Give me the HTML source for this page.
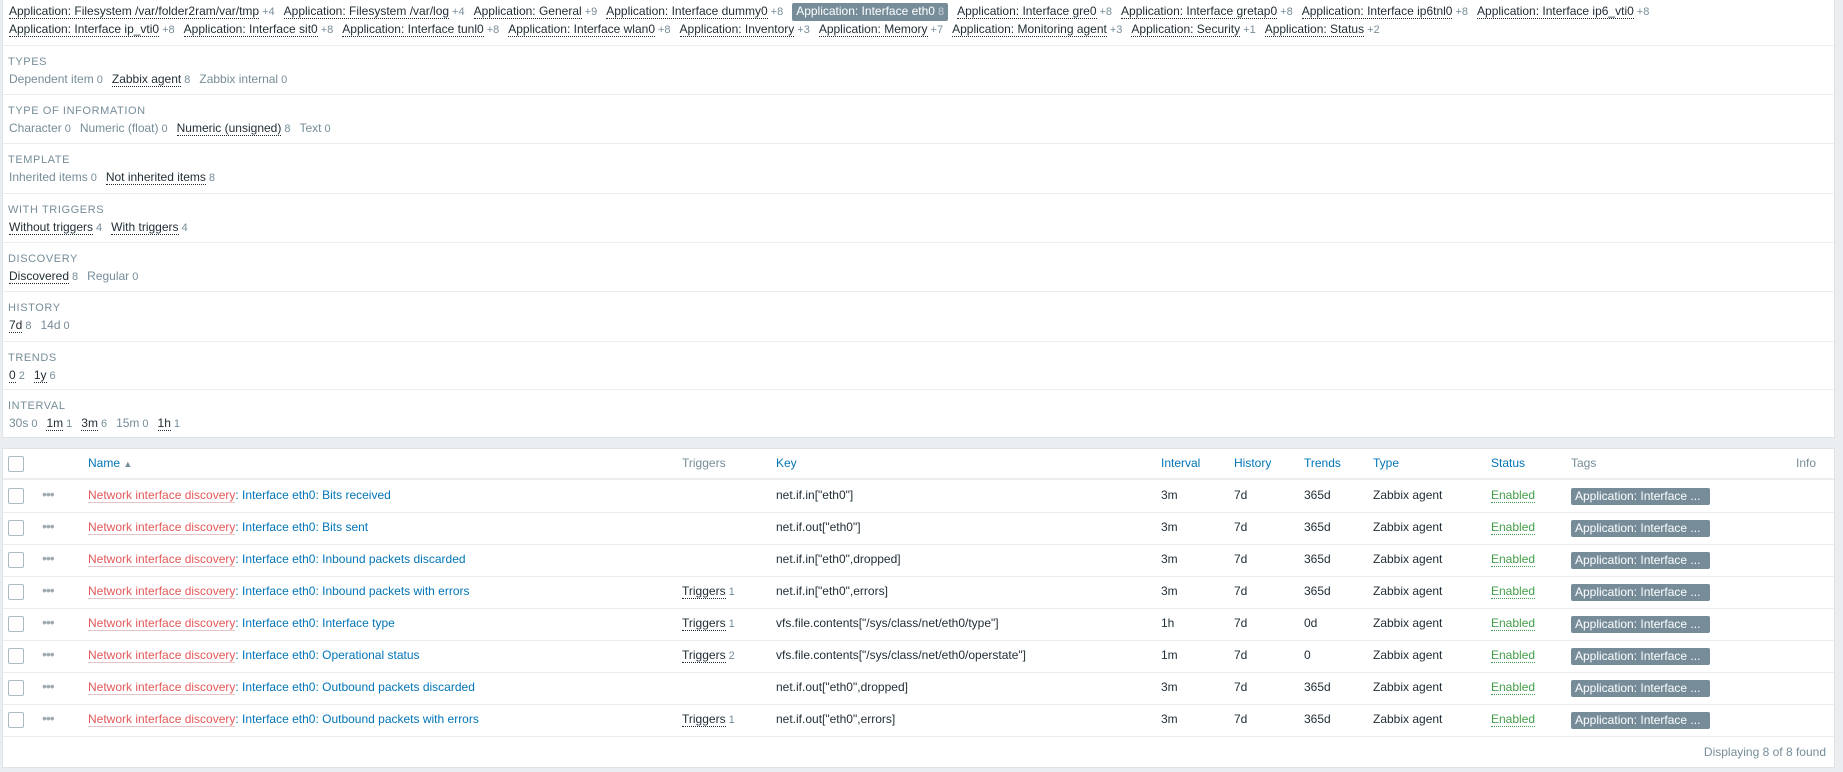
<!DOCTYPE html>
<html><head><meta charset="utf-8"><style>
*{box-sizing:border-box;margin:0;padding:0}
body{width:1843px;height:772px;background:#ebeef0;font-family:"Liberation Sans",Arial,sans-serif;font-size:12px;color:#1f2c33;position:relative;overflow:hidden}
.panel{position:absolute;left:2px;width:1833px;background:#fff;border:1px solid #dfe4e7}
.tags{position:absolute;left:6px;white-space:nowrap;line-height:16px}
.tags span.i{margin-right:9px;display:inline-block}
.l{border-bottom:1px dotted #1f2c33;color:#1f2c33}
.c{color:#768d99;font-size:11px;margin-left:3px}
.sel{background:#768d99;color:#fff;padding:1px 4px;border-radius:2px;line-height:15px}
.sel .c{color:#c5d0d6}
.sec{position:absolute;left:0;width:100%;border-top:1px solid #ebeef0;height:49px}
.sec h{position:absolute;left:5px;top:10px;font-size:11px;color:#768d99;letter-spacing:.6px}
.sec .it{position:absolute;left:6px;top:26px;white-space:nowrap}
.sec .it span.i{margin-right:9px;color:#768d99}
.sec .it span.i .l{color:#1f2c33}
.row{position:absolute;left:0;width:100%;height:32px;border-bottom:1px solid #ebeef0}
.row div{position:absolute;top:7px;white-space:nowrap}
.cb{position:absolute;left:5px;top:7px!important;width:16px;height:16px;border:1px solid #acbbc2;border-radius:2px}
.dots{left:39px;top:5px!important;color:#a0acb3;font-size:14px;letter-spacing:-1px}
.red{color:#e45959;border-bottom:1px solid #e4c4c4}
.blue{color:#0275b8}
.en{color:#429e47;border-bottom:1px dotted #429e47}
.tag{background:#768d99;color:#fff;padding:1px 4px;border-radius:2px;width:139px;top:7px!important;height:17px}
.hd div{color:#0275b8}
</style></head><body>
<div class="panel" style="top:-2px;height:440px">
<div class="tags" style="top:4px"><span class="i"><span class="l">Application: Filesystem /var/folder2ram/var/tmp</span><span class="c">+4</span></span><span class="i"><span class="l">Application: Filesystem /var/log</span><span class="c">+4</span></span><span class="i"><span class="l">Application: General</span><span class="c">+9</span></span><span class="i"><span class="l">Application: Interface dummy0</span><span class="c">+8</span></span><span class="i sel">Application: Interface eth0<span class="c">8</span></span><span class="i"><span class="l">Application: Interface gre0</span><span class="c">+8</span></span><span class="i"><span class="l">Application: Interface gretap0</span><span class="c">+8</span></span><span class="i"><span class="l">Application: Interface ip6tnl0</span><span class="c">+8</span></span><span class="i"><span class="l">Application: Interface ip6_vti0</span><span class="c">+8</span></span></div>
<div class="tags" style="top:22px"><span class="i"><span class="l">Application: Interface ip_vti0</span><span class="c">+8</span></span><span class="i"><span class="l">Application: Interface sit0</span><span class="c">+8</span></span><span class="i"><span class="l">Application: Interface tunl0</span><span class="c">+8</span></span><span class="i"><span class="l">Application: Interface wlan0</span><span class="c">+8</span></span><span class="i"><span class="l">Application: Inventory</span><span class="c">+3</span></span><span class="i"><span class="l">Application: Memory</span><span class="c">+7</span></span><span class="i"><span class="l">Application: Monitoring agent</span><span class="c">+3</span></span><span class="i"><span class="l">Application: Security</span><span class="c">+1</span></span><span class="i"><span class="l">Application: Status</span><span class="c">+2</span></span></div>
<div class="sec" style="top:46px"><h>TYPES</h><div class="it"><span class="i">Dependent item<span class="c">0</span></span><span class="i"><span class="l">Zabbix agent</span><span class="c">8</span></span><span class="i">Zabbix internal<span class="c">0</span></span></div></div>
<div class="sec" style="top:95px"><h>TYPE OF INFORMATION</h><div class="it"><span class="i">Character<span class="c">0</span></span><span class="i">Numeric (float)<span class="c">0</span></span><span class="i"><span class="l">Numeric (unsigned)</span><span class="c">8</span></span><span class="i">Text<span class="c">0</span></span></div></div>
<div class="sec" style="top:144px"><h>TEMPLATE</h><div class="it"><span class="i">Inherited items<span class="c">0</span></span><span class="i"><span class="l">Not inherited items</span><span class="c">8</span></span></div></div>
<div class="sec" style="top:194px"><h>WITH TRIGGERS</h><div class="it"><span class="i"><span class="l">Without triggers</span><span class="c">4</span></span><span class="i"><span class="l">With triggers</span><span class="c">4</span></span></div></div>
<div class="sec" style="top:243px"><h>DISCOVERY</h><div class="it"><span class="i"><span class="l">Discovered</span><span class="c">8</span></span><span class="i">Regular<span class="c">0</span></span></div></div>
<div class="sec" style="top:292px"><h>HISTORY</h><div class="it"><span class="i"><span class="l">7d</span><span class="c">8</span></span><span class="i">14d<span class="c">0</span></span></div></div>
<div class="sec" style="top:342px"><h>TRENDS</h><div class="it"><span class="i"><span class="l">0</span><span class="c">2</span></span><span class="i"><span class="l">1y</span><span class="c">6</span></span></div></div>
<div class="sec" style="top:390px"><h>INTERVAL</h><div class="it"><span class="i">30s<span class="c">0</span></span><span class="i"><span class="l">1m</span><span class="c">1</span></span><span class="i"><span class="l">3m</span><span class="c">6</span></span><span class="i">15m<span class="c">0</span></span><span class="i"><span class="l">1h</span><span class="c">1</span></span></div></div>
</div>
<div class="panel" style="top:448px;height:320px">
<div class="row hd" style="top:0;height:31px;border-bottom:2px solid #ebeef0"><div class="cb"></div><div style="left:85px">Name <span style="color:#768d99;font-size:9px">▲</span></div><div style="left:679px;color:#768d99">Triggers</div><div style="left:773px">Key</div><div style="left:1158px">Interval</div><div style="left:1231px">History</div><div style="left:1301px">Trends</div><div style="left:1370px">Type</div><div style="left:1488px">Status</div><div style="left:1568px;color:#768d99">Tags</div><div style="left:1793px;color:#768d99">Info</div></div>
<div id="rows"></div>
<div style="position:absolute;right:8px;top:296px;color:#768d99">Displaying 8 of 8 found</div>
</div>
<script>
var d=[["Bits received","","net.if.in[\"eth0\"]","3m","365d"],["Bits sent","","net.if.out[\"eth0\"]","3m","365d"],["Inbound packets discarded","","net.if.in[\"eth0\",dropped]","3m","365d"],["Inbound packets with errors","1","net.if.in[\"eth0\",errors]","3m","365d"],["Interface type","1","vfs.file.contents[\"/sys/class/net/eth0/type\"]","1h","0d"],["Operational status","2","vfs.file.contents[\"/sys/class/net/eth0/operstate\"]","1m","0"],["Outbound packets discarded","","net.if.out[\"eth0\",dropped]","3m","365d"],["Outbound packets with errors","1","net.if.out[\"eth0\",errors]","3m","365d"]];
var h="";d.forEach(function(r,i){h+='<div class="row" style="top:'+(32+i*32)+'px"><div class="cb"></div><div class="dots">•••</div><div style="left:85px"><span class="red">Network interface discovery</span><span class="blue">: Interface eth0: '+r[0]+'</span></div>'+(r[1]?'<div style="left:679px"><span class="l">Triggers</span><span class="c">'+r[1]+'</span></div>':'')+'<div style="left:773px">'+r[2].replace(/"/g,'&quot;')+'</div><div style="left:1158px">'+r[3]+'</div><div style="left:1231px">7d</div><div style="left:1301px">'+r[4]+'</div><div style="left:1370px">Zabbix agent</div><div style="left:1488px"><span class="en">Enabled</span></div><div class="tag" style="left:1568px">Application: Interface ...</div></div>'});
document.getElementById("rows").innerHTML=h;
</script>
</body></html>
